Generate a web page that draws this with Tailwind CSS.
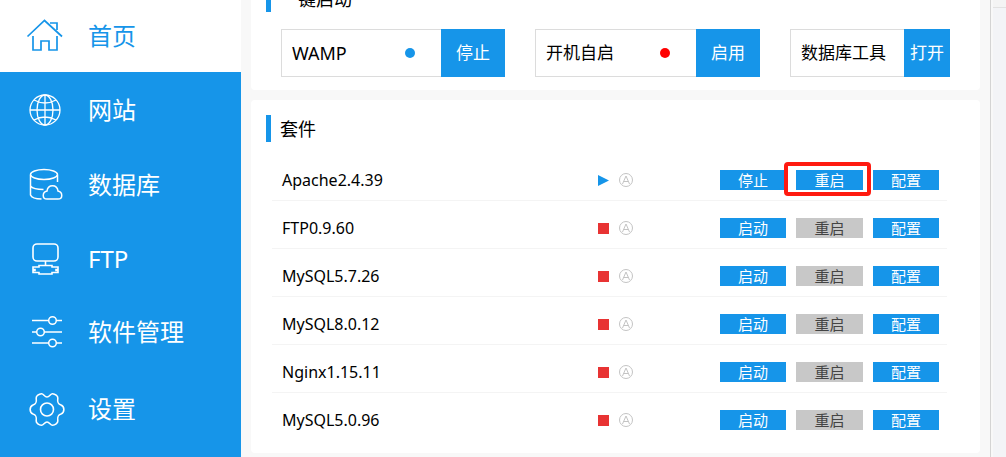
<!DOCTYPE html>
<html lang="zh-CN">
<head>
    <meta charset="UTF-8">
    <meta name="viewport" content="width=device-width, initial-scale=1.0">
    <title>首页</title>
    <script src="https://cdn.jsdelivr.net/npm/@tailwindcss/browser@4"></script>
</head>
<body class="h-screen flex overflow-hidden bg-[#f8f8f8] text-black font-['Noto_Sans','Noto_Sans_CJK_SC',sans-serif]">
    <!-- Sidebar -->
    <nav class="w-[241px] shrink-0 bg-[#1695e9] text-white text-2xl">
        <a href="#" class="flex items-center gap-[25px] h-[72px] pl-[27px] bg-white text-[#1695e9]">
            <svg class="size-9 overflow-visible" viewBox="0 0 36 36" fill="none" stroke="currentColor" stroke-width="1.7">
                <path d="M.5 18.5 17.5 2.5 35 18.5M6 18v14h8v-9h8v9h8V18M23 5h7v7"/>
            </svg>
            <span>首页</span>
        </a>
        <a href="#" class="flex items-center gap-[25px] h-[76px] pl-[27px]">
            <svg class="size-9 overflow-visible" viewBox="0 0 36 36" fill="none" stroke="currentColor" stroke-width="1.3">
                <circle cx="18" cy="18" r="15"/>
                <ellipse cx="18" cy="18" rx="8" ry="15"/>
                <path d="M18 3v30M3 18h30M7 8q11 6 22 0M7 28q11-6 22 0"/>
            </svg>
            <span>网站</span>
        </a>
        <a href="#" class="flex items-center gap-[25px] h-[74px] pl-[27px]">
            <svg class="size-9 overflow-visible" viewBox="0 0 36 36" fill="none" stroke="currentColor" stroke-width="1.5">
                <ellipse cx="17" cy="7.5" rx="13.5" ry="5"/>
                <path d="M3.5 8v20c1 2.500 6 4 11 4M30.5 8v7M3.5 19c2 2.5 7 3.5 13 3.5"/>
                <path d="M20 32c-5 0-5-7 0-8 1-7 10-7 11 0 5 1 5 8 0 8z"/>
            </svg>
            <span>数据库</span>
        </a>
        <a href="#" class="flex items-center gap-[25px] h-[74px] pl-[27px]">
            <svg class="size-9 overflow-visible" viewBox="0 0 36 36" fill="none" stroke="currentColor" stroke-width="1.6">
                <rect x="6" y="3" width="25" height="17" rx="4"/>
                <path d="M18.500 20v4M12 24.500h13v1.500h6v2.500h-2v1h2V31.500h-6V33H12v-1.500H6v-2h2v-1H6V26h6z"/>
            </svg>
            <span>FTP</span>
        </a>
        <a href="#" class="flex items-center gap-[25px] h-[72px] pl-[27px]">
            <svg class="size-9 overflow-visible" viewBox="0 0 36 36" fill="none" stroke="currentColor" stroke-width="1.5">
                <path d="M5 6.5h17M29.5 6.5H35M5 18h4.5M17.5 18H35M5 29h17M29.5 29H35"/>
                <circle cx="25.5" cy="6.5" r="3.8"/>
                <circle cx="13.5" cy="18" r="3.8"/>
                <circle cx="25.5" cy="29" r="3.8"/>
            </svg>
            <span>软件管理</span>
        </a>
        <a href="#" class="flex items-center gap-[25px] h-[82px] pl-[27px]">
            <svg class="size-9 overflow-visible" viewBox="0 0 36 36" fill="none" stroke="currentColor" stroke-width="1.6">
                <g transform="translate(20 18.5)">
                    <circle r="6.5"/>
                    <path d="M0-12.5C2.5-12.5 3.5-16 5.5-15.8 8-15.5 11-13.5 10.8-11.5 10.2-7 11-5.5 14-4.5 17.8-3 17.8 3 14 4.5 11 5.5 10.2 7 10.8 11.5 11 13.5 8 15.5 5.5 15.8 3.5 16 2.5 12.5 0 12.5-2.5 12.5-3.5 16-5.5 15.8-8 15.5-11 13.5-10.8 11.5-10.2 7-11 5.5-14 4.5-17.8 3-17.8-3-14-4.5-11-5.5-10.2-7-10.8-11.5-11-13.5-8-15.5-5.5-15.8-3.5-16-2.5-12.5 0-12.5z"/>
                </g>
            </svg>
            <span>设置</span>
        </a>
    </nav>

    <!-- Content, scrolled down a little -->
    <main class="grow min-w-0 -mt-[30px] px-[10px]">
        <section class="h-[120px] bg-white rounded-sm pt-[15px]">
            <h2 class="ml-[15px] h-[27px] border-l-[5px] border-[#1695e9] pl-[9px] text-lg leading-[29px]">一键启动</h2>
            <div class="grid grid-cols-[224fr_225fr_160fr] gap-[30px] mt-[17px] mx-[30px] text-[17px]">
                <div class="flex h-12">
                    <div class="grow flex items-center justify-between border border-r-0 border-[#dcdcdc] pl-[10px] pr-[26px]">
                        <span class="text-lg">WAMP</span>
                        <span class="size-[10px] rounded-full bg-[#1695e9]"></span>
                    </div>
                    <button class="w-16 bg-[#1695e9] text-white">停止</button>
                </div>
                <div class="flex h-12">
                    <div class="grow flex items-center justify-between border border-r-0 border-[#dcdcdc] pl-[10px] pr-[26px]">
                        <span>开机自启</span>
                        <span class="size-[10px] rounded-full bg-[#ff0000]"></span>
                    </div>
                    <button class="w-16 bg-[#1695e9] text-white">启用</button>
                </div>
                <div class="flex h-12">
                    <div class="grow flex items-center border border-r-0 border-[#dcdcdc] pl-[10px]">数据库工具</div>
                    <button class="w-[46px] bg-[#1695e9] text-white">打开</button>
                </div>
            </div>
        </section>

        <section class="mt-[10px] bg-white rounded-sm pt-[15px] pb-3">
            <h2 class="ml-[15px] h-[27px] border-l-[5px] border-[#1695e9] pl-[9px] text-lg leading-[29px]">套件</h2>
            <div class="mt-[11px] ml-[21px] mr-[33px]">
                <table class="w-full table-fixed border-separate border-spacing-0 text-[15px] leading-5">
                    <colgroup>
                        <col>
                        <col class="w-[122px]">
                        <col class="w-[227px]">
                    </colgroup>
                    <tbody id="services"></tbody>
                </table>
            </div>
        </section>
    </main>

    <!-- Edge of the neighbouring window -->
    <aside class="w-4 shrink-0 border-l border-[#d4d4d4] pl-[2px]">
        <div class="h-2 bg-[#f4f4f4] border-b border-[#e2e2e2]"></div>
        <div class="h-full bg-[#f3f4f7]"></div>
    </aside>

    <script>
        const services = [
            { name: 'Apache2.4.39', running: true },
            { name: 'FTP0.9.60', running: false },
            { name: 'MySQL5.7.26', running: false },
            { name: 'MySQL8.0.12', running: false },
            { name: 'Nginx1.15.11', running: false },
            { name: 'MySQL5.0.96', running: false }
        ];

        const playIcon = '<svg class="w-[11px] h-[11px]" viewBox="0 0 11 11"><path d="M0 0 11 5.5 0 11z" fill="#1695e9"/></svg>';
        const stopIcon = '<span class="size-[11px] bg-[#e83333]"></span>';
        const highlight = '<span class="absolute -left-3 -right-2 -top-2 -bottom-[6px] border-4 border-[#ff1a10] rounded-[4px]"></span>';

        document.getElementById('services').innerHTML = services.map(s => `
            <tr class="group">
                <td class="pt-[17px] pb-[10px] pl-[10px] border-b border-[#f4f4f4] group-last:border-transparent text-base leading-5">${s.name}</td>
                <td class="pt-[17px] pb-[10px] border-b border-[#f4f4f4] group-last:border-transparent">
                    <div class="flex items-center gap-[10px] h-5">
                        ${s.running ? playIcon : stopIcon}
                        <svg class="size-[14px] overflow-visible" viewBox="0 0 14 14" fill="none" stroke="#c4c4c4">
                            <circle cx="7" cy="7" r="6.5"/>
                            <path d="M3.5 11 7 3l3.5 8M4.8 8.5h4.4"/>
                        </svg>
                    </div>
                </td>
                <td class="pt-[17px] pb-[10px] border-b border-[#f4f4f4] group-last:border-transparent">
                    <div class="flex gap-[10px] h-5">
                        <button class="w-[66px] bg-[#1695e9] text-white">${s.running ? '停止' : '启动'}</button>
                        <div class="relative w-[67px]">
                            <button class="block w-full h-5 ${s.running ? 'bg-[#1695e9] text-white' : 'bg-[#c8c8c8] text-[#444444]'}"${s.running ? '' : ' disabled'}>重启</button>
                            ${s.running ? highlight : ''}
                        </div>
                        <button class="w-[66px] bg-[#1695e9] text-white">配置</button>
                    </div>
                </td>
            </tr>`).join('');
    </script>
</body>
</html>
